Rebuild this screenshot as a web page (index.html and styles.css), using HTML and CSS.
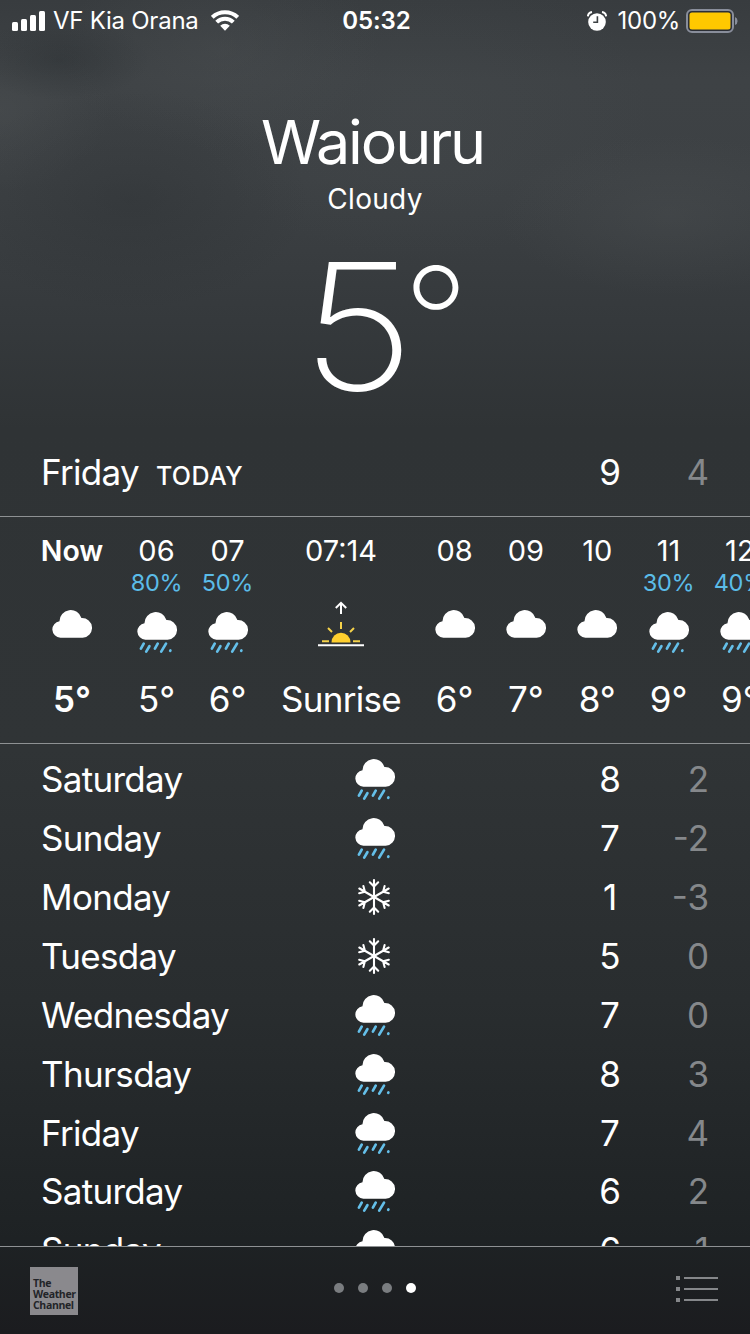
FILE: index.html
```html
<!DOCTYPE html>
<html lang="en">
<head>
<meta charset="utf-8">
<title>Weather</title>
<link rel="stylesheet" href="styles.css">
</head>
<body>
<svg class="defs" aria-hidden="true">
  <symbol id="cloud" viewBox="0 0 40 44">
    <path fill="#fff" transform="scale(1.015 1)" d="M8.3 28.7A8.3 8.3 0 0 1 7.4 12.2A11 11 0 0 1 29 9.1A9.8 9.8 0 1 1 30.2 28.7Z"/>
  </symbol>
  <symbol id="rain" viewBox="0 0 40 44">
    <use href="#cloud"/>
    <g stroke="#64bfe9" stroke-width="2.7" stroke-linecap="round">
      <path d="M6.7 32.6L3.9 37.6M12.4 35.2L9.2 40.6M20.7 32.6L17.9 37.6M29 32.6L24.2 40.6M33.4 39.5L33.2 39.9"/>
    </g>
  </symbol>
  <symbol id="snow" viewBox="-20 -20 40 40">
    <g id="arms" fill="none" stroke="#fff" stroke-width="2.1" stroke-linecap="round">
      <g id="arm"><path d="M0 0V-17M0 -10.5L-4.2 -14.7M0 -10.5L4.2 -14.7"/></g>
      <use href="#arm" transform="rotate(60)"/><use href="#arm" transform="rotate(120)"/>
      <use href="#arm" transform="rotate(180)"/><use href="#arm" transform="rotate(240)"/>
      <use href="#arm" transform="rotate(300)"/>
    </g>
  </symbol>
</svg>
<main class="screen">
  <header class="status">
    <div class="status-left">
      <svg class="signal" viewBox="0 0 33 20"><g fill="#fff"><rect y="11" width="6" height="9" rx="1.5"/><rect x="9" y="8" width="6" height="12" rx="1.5"/><rect x="18" y="4" width="6" height="16" rx="1.5"/><rect x="27" width="6" height="20" rx="1.5"/></g></svg>
      <span class="carrier">VF Kia Orana</span>
      <svg class="wifi" viewBox="0 0 28 21"><g fill="none" stroke="#fff" stroke-width="3.9"><path d="M1.3 7.3A18.6 18.6 0 0 1 26.7 7.3M5.7 12.2A11.6 11.6 0 0 1 22.3 12.2"/></g><path fill="#fff" d="M9.2 15.7A7 7 0 0 1 18.8 15.7L14 20.8Z"/></svg>
    </div>
    <span class="clock">05:32</span>
    <div class="status-right">
      <svg class="alarm" viewBox="0 0 20 20"><circle cx="10" cy="11" r="8.8" fill="#fff"/><path d="M.9 5.3Q1.3 1.7 5 1.1M15 1.1Q18.7 1.7 19.1 5.3" fill="none" stroke="#fff" stroke-width="2"/><path d="M10.4 5.2V11.2H6.2" fill="none" stroke="#3d4144" stroke-width="1.6"/></svg>
      <span class="percent">100%</span>
      <svg class="battery" viewBox="0 0 52 24"><rect x="1" y="1" width="46" height="22" rx="5" fill="#2c2f36" stroke="#898e9b" stroke-width="2"/><rect x="3.5" y="3.5" width="41" height="17" rx="2.5" fill="#ffc800"/><path d="M49 8Q51.6 9 51.6 12T49 16Z" fill="#898e9b"/></svg>
    </div>
  </header>

  <section class="hero">
    <h1 class="city">Waiouru</h1>
    <p class="condition">Cloudy</p>
    <p class="temp"><span class="temp-num">5</span><span class="temp-deg">°</span></p>
  </section>

  <section class="row today">
    <span class="day">Friday<span class="tag">TODAY</span></span><span></span>
    <span class="high">9</span><span class="low">4</span>
  </section>

  <section class="hours">
    <div class="hour now"><span class="time">Now</span><span class="chance"></span><svg class="icon dry"><use href="#cloud"/></svg><span class="deg">5°</span></div>
    <div class="hour"><span class="time">06</span><span class="chance">80%</span><svg class="icon"><use href="#rain"/></svg><span class="deg">5°</span></div>
    <div class="hour"><span class="time">07</span><span class="chance">50%</span><svg class="icon"><use href="#rain"/></svg><span class="deg">6°</span></div>
    <div class="hour"><span class="time">07:14</span><span class="chance"></span>
      <svg class="icon sunrise" viewBox="0 0 46 46"><path d="M23 13V2.5M17.8 7L23 1.8L28.2 7" fill="none" stroke="#fff" stroke-width="2"/><path d="M13.5 41.5A9.5 9.8 0 0 1 32.5 41.5Z" fill="#ffcf2e"/><path d="M23 21V28M10 27L14 31M36 27L32 31M4 40.2H11M35 40.2H42" stroke="#f5d24a" stroke-width="2"/><path d="M0 44.2H46" stroke="#fff" stroke-width="2"/></svg>
      <span class="deg word">Sunrise</span></div>
    <div class="hour"><span class="time">08</span><span class="chance"></span><svg class="icon dry"><use href="#cloud"/></svg><span class="deg">6°</span></div>
    <div class="hour"><span class="time">09</span><span class="chance"></span><svg class="icon dry"><use href="#cloud"/></svg><span class="deg">7°</span></div>
    <div class="hour"><span class="time">10</span><span class="chance"></span><svg class="icon dry"><use href="#cloud"/></svg><span class="deg">8°</span></div>
    <div class="hour"><span class="time">11</span><span class="chance">30%</span><svg class="icon"><use href="#rain"/></svg><span class="deg">9°</span></div>
    <div class="hour"><span class="time">12</span><span class="chance">40%</span><svg class="icon"><use href="#rain"/></svg><span class="deg">9°</span></div>
  </section>

  <section class="days">
    <div class="row"><span class="day">Saturday</span><svg class="icon"><use href="#rain"/></svg><span class="high">8</span><span class="low">2</span></div>
    <div class="row"><span class="day">Sunday</span><svg class="icon"><use href="#rain"/></svg><span class="high">7</span><span class="low">-2</span></div>
    <div class="row"><span class="day">Monday</span><svg class="icon flake"><use href="#snow"/></svg><span class="high">1</span><span class="low">-3</span></div>
    <div class="row"><span class="day">Tuesday</span><svg class="icon flake"><use href="#snow"/></svg><span class="high">5</span><span class="low">0</span></div>
    <div class="row"><span class="day">Wednesday</span><svg class="icon"><use href="#rain"/></svg><span class="high">7</span><span class="low">0</span></div>
    <div class="row"><span class="day">Thursday</span><svg class="icon"><use href="#rain"/></svg><span class="high">8</span><span class="low">3</span></div>
    <div class="row"><span class="day">Friday</span><svg class="icon"><use href="#rain"/></svg><span class="high">7</span><span class="low">4</span></div>
    <div class="row"><span class="day">Saturday</span><svg class="icon"><use href="#rain"/></svg><span class="high">6</span><span class="low">2</span></div>
    <div class="row"><span class="day">Sunday</span><svg class="icon"><use href="#rain"/></svg><span class="high">6</span><span class="low">1</span></div>
  </section>

  <footer class="bar">
    <div class="logo"><span>The</span><span>Weather</span><span>Channel</span></div>
    <div class="dots"><i></i><i></i><i></i><i class="on"></i></div>
    <svg class="menu" viewBox="0 0 42 26"><path d="M0 2H4M0 13H4M0 24H4" stroke="#85878a" stroke-width="4"/><path d="M8 2H42M8 13H42M8 24H42" stroke="#85878a" stroke-width="2"/></svg>
  </footer>
</main>
</body>
</html>
```

FILE: styles.css
```css
* { box-sizing: border-box; margin: 0; padding: 0; }

body {
  width: 750px;
  height: 1334px;
  overflow: hidden;
  font-family: Inter, "Liberation Sans", sans-serif;
  color: #fff;
  background: #2f3335;
}

.defs { position: absolute; width: 0; height: 0; }
svg { display: block; }

.screen {
  display: flex;
  flex-direction: column;
  width: 750px;
  height: 1334px;
  overflow: hidden;
  background:
    radial-gradient(90px 40px at 60px 60px, rgba(38, 43, 46, .35), transparent),
    radial-gradient(180px 110px at 130px 200px, rgba(38, 42, 45, .3), transparent),
    radial-gradient(160px 100px at 220px 50px, rgba(84, 88, 90, .25), transparent),
    radial-gradient(230px 150px at 420px 110px, rgba(82, 88, 90, .15), transparent),
    radial-gradient(170px 80px at 670px 215px, rgba(84, 88, 90, .25), transparent),
    radial-gradient(110px 80px at 0 110px, rgba(84, 88, 90, .3), transparent),
    linear-gradient(#383c3f 0, #3e4245 80px, #3d4144 180px, #35393c 320px, #2f3335 430px, #303436 750px, #292d2f 1000px, #1e2224 1240px, #1b1c1f 1334px);
}

.status {
  display: grid;
  grid-template-columns: 1fr auto 1fr;
  align-items: center;
  height: 41px;
  padding: 0 12px;
  font-size: 24px;
}
.status-left, .status-right { display: flex; align-items: center; }
.status-right { justify-content: flex-end; }
.signal { width: 33px; height: 20px; margin-right: 8px; }
.carrier { letter-spacing: -.25px; }
.wifi { width: 28px; height: 21px; margin-left: 12px; }
.clock { padding-left: 3px; font-weight: 600; letter-spacing: -.1px; }
.alarm { width: 20px; height: 20px; margin-right: 11px; }
.percent { letter-spacing: -.3px; }
.battery { width: 52px; height: 24px; margin-left: 6px; }

.hero {
  display: flex;
  flex-direction: column;
  align-items: center;
  height: 402px;
}
.city {
  margin: 66px 5px 0 0;
  font-size: 61px;
  font-weight: 400;
  line-height: 70px;
  letter-spacing: -2.1px;
}
.condition {
  margin-top: 6px;
  font-size: 28px;
  line-height: 32px;
  letter-spacing: .3px;
}
.temp {
  display: flex;
  margin: 31px 0 0 26px;
  font-size: 176px;
  font-weight: 200;
  line-height: 160px;
}
.temp-num { transform: scaleX(1.11); }
.temp-deg {
  margin: -7px 0 0 -6px;
  font-size: 146px;
  font-weight: 250;
}

.row {
  display: grid;
  grid-template-columns: 310px 160px 119px 1fr;
  align-items: center;
  flex: none;
  height: 58.86px;
  padding: 0 41px;
  font-size: 35px;
}
.day { letter-spacing: -.7px; }
.high { width: 40px; justify-self: end; text-align: center; }
.low { justify-self: end; color: #85888b; }
.tag { margin-left: 17px; font-size: 25px; font-weight: 500; letter-spacing: .4px; }

.today { height: 73px; padding-bottom: 15px; }

.hours {
  display: grid;
  grid-template-columns: 98px 71px 71px 156px repeat(5, 71.3px);
  flex: none;
  width: 750px;
  height: 228px;
  padding-left: 23px;
  border-top: 1px solid #8e9193;
  border-bottom: 1px solid #8e9193;
  overflow: hidden;
}
.hour {
  display: flex;
  flex-direction: column;
  align-items: center;
}
.time { margin-top: 17px; font-size: 29px; line-height: 34px; }
.chance { height: 29px; font-size: 23.5px; line-height: 29px; letter-spacing: -.3px; color: #5bbce8; }
.icon { width: 40px; height: 44px; }
.hour .icon { flex: none; margin: 14px 0 23px; }
.hour .dry { margin: 12px 0 25px; }
.hour .sunrise { width: 46px; height: 46px; margin: 4px 0 31px; }
.deg { font-size: 35px; line-height: 42px; }
.word { letter-spacing: -.7px; }
.now .time, .now .deg { font-weight: 600; }
.now .time { font-size: 28.5px; }

.days {
  flex: none;
  height: 502px;
  padding-top: 6px;
  overflow: hidden;
}
.days .icon { margin: 2px 0 0 4px; }
.days .flake { height: 40px; margin: 0 0 0 3px; }

.bar {
  display: grid;
  grid-template-columns: 1fr auto 1fr;
  align-items: center;
  flex: 1;
  padding: 0 32px 3px 30px;
  border-top: 1px solid #8e9193;
}
.logo {
  display: flex;
  flex-direction: column;
  width: 48px;
  height: 48px;
  margin-top: 3px;
  padding: 11px 0 0 3px;
  background: #8a898d;
  color: #222428;
  font: 700 10.5px/11.4px "Open Sans", sans-serif;
  letter-spacing: -.35px;
}
.dots { display: flex; gap: 14px; margin: 0 0 2px 2px; }
.dots i { width: 10px; height: 10px; border-radius: 50%; background: #7a7d80; }
.dots .on { background: #fff; }
.menu { width: 42px; height: 26px; justify-self: end; }
```
